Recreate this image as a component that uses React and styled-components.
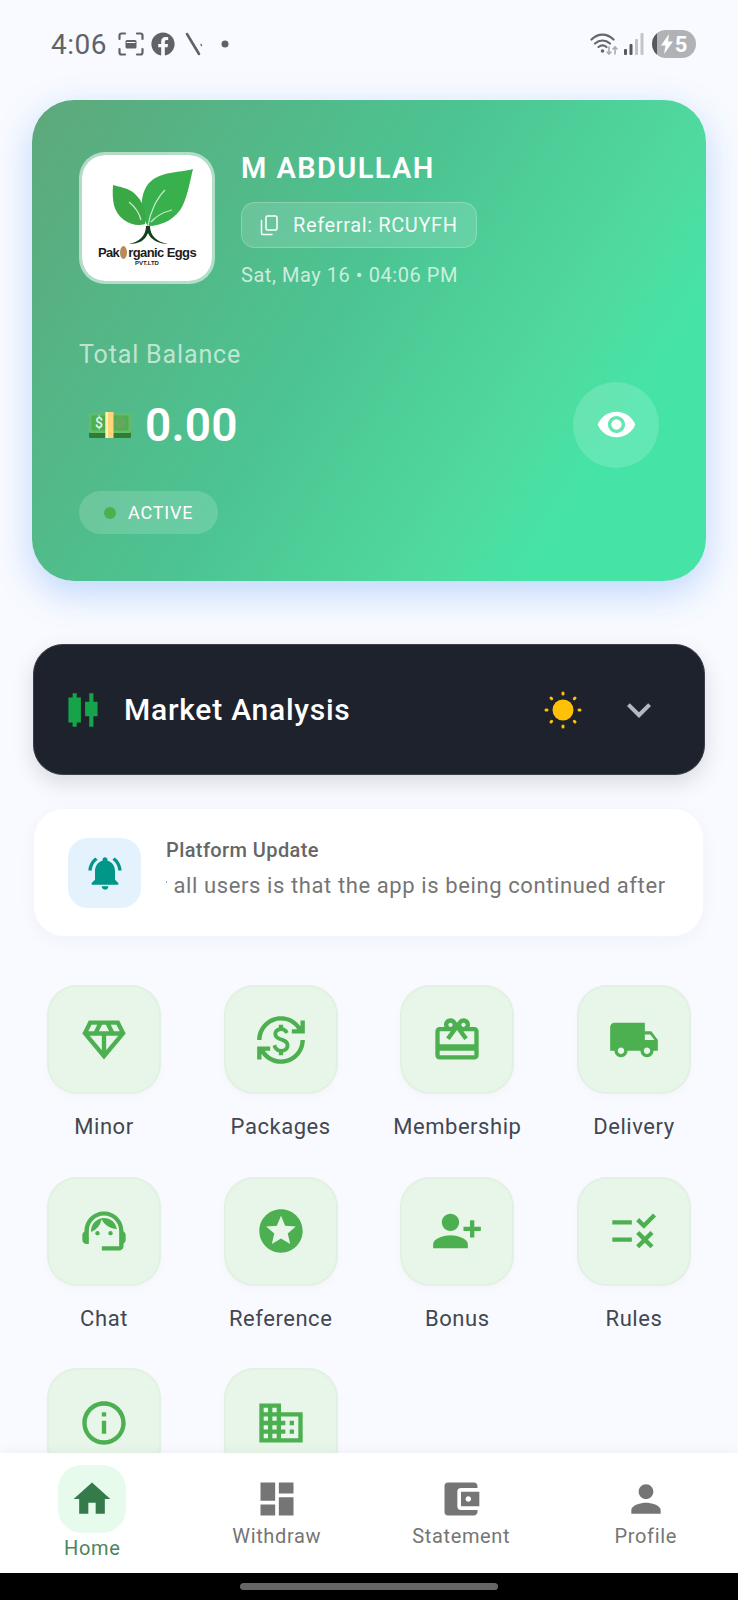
import React from 'react';
import styled, { createGlobalStyle } from 'styled-components';
import { FaFacebook } from 'react-icons/fa';
import {
  MdOutlineDiamond,
  MdCurrencyExchange,
  MdOutlineCardGiftcard,
  MdLocalShipping,
  MdSupportAgent,
  MdStars,
  MdPersonAdd,
  MdRule,
  MdInfoOutline,
  MdDomain,
  MdHome,
  MdDashboard,
  MdAccountBalanceWallet,
  MdPerson,
  MdVisibility,
  MdCandlestickChart,
  MdKeyboardArrowDown,
  MdNotificationsActive,
} from 'react-icons/md';

const GlobalStyle = createGlobalStyle`
  html, body {
    margin: 0;
    padding: 0;
    background: #f8faff;
  }
  body {
    font-family: Roboto, "Liberation Sans", sans-serif;
  }
`;

const Screen = styled.div`
  width: 738px;
  height: 1600px;
  display: flex;
  flex-direction: column;
  overflow: hidden;
  background: #f8faff;
`;

const Scroll = styled.main`
  flex: 1;
  min-height: 0;
  overflow: hidden;
`;

const StatusBar = styled.div`
  height: 100px;
  box-sizing: border-box;
  padding: 26px 42px 0 51px;
  display: flex;
  align-items: flex-start;
  justify-content: space-between;
  color: #5f6368;
`;

const StatusLeft = styled.div`
  display: flex;
  align-items: center;
  height: 36px;
`;

const Time = styled.span`
  font-size: 28px;
  font-weight: 400;
  letter-spacing: 0.5px;
  margin-right: 11px;
`;

const StatusRight = styled.div`
  display: flex;
  align-items: center;
  height: 36px;
`;

const Battery = styled.div`
  width: 44px;
  height: 28px;
  margin-left: 8px;
  border-radius: 14px;
  background: linear-gradient(90deg, #55595e 0 5px, #b0b2b5 5px);
  display: flex;
  align-items: center;
  justify-content: center;
  gap: 2px;
  color: #fff;
  font-size: 22px;
  font-weight: 700;
`;

const BalanceCard = styled.section`
  margin: 0 32px;
  height: 481px;
  box-sizing: border-box;
  padding: 52px 47px 0;
  border-radius: 42px;
  background: linear-gradient(122deg, #5da87b 0%, #4cc492 45%, #50da9f 71%, #45e4a6 82%, #46e3a5 100%);
  box-shadow: 0 12px 36px rgba(33, 120, 243, 0.27);
  color: #fff;
`;

const TopRow = styled.div`
  display: flex;
  gap: 26px;
  height: 132px;
`;

const LogoBox = styled.div`
  width: 136px;
  height: 132px;
  flex: none;
  box-sizing: border-box;
  border: 3px solid rgba(255, 255, 255, 0.55);
  background-clip: padding-box;
  border-radius: 26px;
  background-color: #fff;
  display: flex;
  flex-direction: column;
  align-items: center;
  padding-top: 9px;
  overflow: hidden;
`;

const LogoName = styled.div`
  display: flex;
  align-items: center;
  height: 14px;
  flex: none;
  font-family: "Liberation Sans", sans-serif;
  font-size: 13px;
  font-weight: 700;
  letter-spacing: -0.6px;
  color: #1c1c1c;
  white-space: nowrap;
`;

const Egg = styled.span`
  display: inline-block;
  width: 7px;
  height: 13px;
  margin: 0 1px;
  border-radius: 50%;
  background: #b98a58;
`;

const LogoSub = styled.div`
  flex: none;
  font-family: "Liberation Sans", sans-serif;
  font-size: 6px;
  font-weight: 700;
  line-height: 9px;
  color: #222;
`;

const Info = styled.div`
  display: flex;
  flex-direction: column;
  align-items: flex-start;
  margin-top: -1px;
`;

const Name = styled.div`
  flex: none;
  font-size: 29px;
  font-weight: 600;
  line-height: 34px;
  letter-spacing: 1.4px;
`;

const ReferralPill = styled.div`
  flex: none;
  margin-top: 17px;
  height: 46px;
  box-sizing: border-box;
  padding: 0 18px;
  display: flex;
  align-items: center;
  gap: 15px;
  border: 1px solid rgba(255, 255, 255, 0.22);
  border-radius: 14px;
  background: rgba(255, 255, 255, 0.14);
  font-size: 20px;
  font-weight: 400;
  letter-spacing: 0.63px;
  color: rgba(255, 255, 255, 0.95);
`;

const DateLine = styled.div`
  flex: none;
  margin-top: 14px;
  font-size: 20px;
  line-height: 26px;
  letter-spacing: 0.55px;
  color: rgba(255, 255, 255, 0.72);
`;

const BalanceLabel = styled.div`
  margin-top: 56px;
  font-size: 25px;
  line-height: 30px;
  letter-spacing: 0.85px;
  color: rgba(255, 255, 255, 0.65);
`;

const BalanceRow = styled.div`
  margin-top: 12px;
  height: 85px;
  display: flex;
  align-items: center;
  justify-content: space-between;
`;

const Amount = styled.div`
  display: flex;
  align-items: center;
  gap: 14px;
  padding-left: 10px;
  font-size: 46px;
  font-weight: 600;
  letter-spacing: 0.2px;
`;

const EyeButton = styled.div`
  width: 86px;
  height: 86px;
  border-radius: 50%;
  background: rgba(255, 255, 255, 0.16);
  display: flex;
  align-items: center;
  justify-content: center;
  font-size: 41px;
`;

const StatusPill = styled.div`
  margin-top: 24px;
  width: 139px;
  height: 43px;
  box-sizing: border-box;
  padding-left: 25px;
  display: flex;
  align-items: center;
  gap: 12px;
  border-radius: 22px;
  background: rgba(255, 255, 255, 0.16);
  font-size: 18px;
  font-weight: 400;
  letter-spacing: 0.8px;
`;

const Dot = styled.span`
  width: 12px;
  height: 12px;
  border-radius: 50%;
  background: #4caf50;
`;

const MarketBar = styled.section`
  margin: 63px 33px 0;
  height: 131px;
  box-sizing: border-box;
  padding: 0 41px 0 24px;
  display: flex;
  align-items: center;
  border: 1px solid #3a3e4a;
  border-radius: 30px;
  background: #1e222d;
  box-shadow: 0 8px 22px rgba(0, 0, 0, 0.13);
  color: #fff;
`;

const MarketTitle = styled.div`
  flex: 1;
  margin-left: 16px;
  font-size: 30px;
  font-weight: 500;
  letter-spacing: 0.75px;
`;

const NoticeCard = styled.section`
  margin: 34px 35px 0 34px;
  height: 127px;
  box-sizing: border-box;
  padding: 0 38px 0 34px;
  display: flex;
  align-items: center;
  gap: 25px;
  border-radius: 30px;
  background: #fff;
  box-shadow: 0 4px 20px rgba(40, 60, 120, 0.04);
`;

const BellBox = styled.div`
  width: 73px;
  height: 70px;
  flex: none;
  border-radius: 20px;
  background: #e3f2fd;
  display: flex;
  align-items: center;
  justify-content: center;
  color: #009688;
  font-size: 40px;
`;

const NoticeText = styled.div`
  flex: 1;
  min-width: 0;
  overflow: hidden;
  padding-bottom: 8px;
`;

const NoticeTitle = styled.div`
  font-size: 20px;
  font-weight: 500;
  line-height: 24px;
  letter-spacing: 0.4px;
  color: #666;
`;

const Marquee = styled.div`
  margin-top: 10px;
  margin-left: ${(props) => props.$offset}px;
  font-size: 22px;
  line-height: 28px;
  letter-spacing: 0.6px;
  color: #757575;
  white-space: nowrap;
`;

const MenuGrid = styled.div`
  margin-top: 49px;
  padding: 0 47px;
  display: grid;
  grid-template-columns: repeat(4, 114px);
  justify-content: space-between;
  row-gap: 35.5px;
`;

const MenuItem = styled.div`
  display: flex;
  flex-direction: column;
  align-items: center;
`;

const MenuTile = styled.div`
  width: 114px;
  height: 109px;
  box-sizing: border-box;
  border: 2px solid rgba(76, 175, 80, 0.04);
  border-radius: 30px;
  background: #e8f5e9;
  box-shadow: 0 4px 10px rgba(0, 0, 0, 0.02);
  display: flex;
  align-items: center;
  justify-content: center;
  color: #4caf50;
  font-size: 52px;
`;

const MenuLabel = styled.div`
  margin-top: 19px;
  font-size: 22px;
  font-weight: 400;
  line-height: 28px;
  letter-spacing: 0.55px;
  color: #424750;
  white-space: nowrap;
`;

const FlippedIcon = styled(MdPersonAdd)`
  transform: scaleX(-1);
`;

const BottomNav = styled.nav`
  height: 120px;
  flex: none;
  display: grid;
  grid-template-columns: repeat(4, 1fr);
  background: #fff;
  box-shadow: 0 -2px 10px rgba(0, 0, 0, 0.04);
  z-index: 1;
`;

const NavItem = styled.div`
  display: flex;
  flex-direction: column;
  align-items: center;
  padding-top: 12px;
`;

const NavIcon = styled.div`
  width: ${(props) => (props.$active ? '68px' : '44px')};
  height: ${(props) => (props.$active ? '68px' : '56px')};
  box-sizing: border-box;
  padding-top: 12px;
  display: flex;
  justify-content: center;
  border-radius: 24px;
  background: ${(props) => (props.$active ? '#e6fbec' : 'transparent')};
  color: ${(props) => (props.$active ? '#357a4b' : '#757575')};
  font-size: 44px;
`;

const NavLabel = styled.div`
  margin-top: 3px;
  font-size: 20px;
  line-height: 24px;
  letter-spacing: 0.65px;
  color: ${(props) => (props.$active ? '#4b8660' : '#757575')};
`;

const GestureBar = styled.div`
  height: 27px;
  flex: none;
  background: #000;
  display: flex;
  justify-content: center;
  padding-top: 10px;
  box-sizing: border-box;
`;

const GestureHandle = styled.div`
  width: 258px;
  height: 7px;
  border-radius: 4px;
  background: #666;
`;

const ScreenshotIcon = () => (
  <svg width="26" height="24" viewBox="0 0 26 24" fill="none" stroke="#5f6368" strokeWidth="2.2" strokeLinecap="round">
    <path d="M1.5 7V3.5a2 2 0 0 1 2-2H7M19 1.5h3.5a2 2 0 0 1 2 2V7M24.5 17v3.5a2 2 0 0 1-2 2H19M7 22.5H3.5a2 2 0 0 1-2-2V17" />
    <rect x="7.5" y="8" width="11" height="8.5" rx="1.5" fill="#5f6368" stroke="none" />
    <path d="M9 10.5h8" stroke="#fff" strokeWidth="1" />
  </svg>
);

const SlashIcon = () => (
  <svg width="20" height="24" viewBox="0 0 20 24" fill="none" stroke="#5f6368" strokeLinecap="round" style={{ marginLeft: 10 }}>
    <path d="M2 2l12 20" strokeWidth="2.6" />
    <path d="M16 12.5l.5 1" strokeWidth="1.4" />
  </svg>
);

const WifiIcon = () => (
  <svg width="28" height="26" viewBox="0 0 28 26" fill="none" stroke="#63676b" strokeLinecap="round">
    <path d="M1.5 8.5C8 2 17 2 23.5 8.5" strokeWidth="2.2" />
    <path d="M5 12.5c4.5-4 10.5-4 15 0" strokeWidth="2.2" />
    <path d="M8.5 16c2.5-2 5.5-2 8 0" strokeWidth="2.2" />
    <circle cx="12.5" cy="20" r="1.8" fill="#63676b" stroke="none" />
    <path d="M19 16v7M17 21l2 2 2-2" stroke="#a9abae" strokeWidth="1.6" />
    <path d="M25 23v-7M23 18l2-2 2 2" stroke="#a9abae" strokeWidth="1.6" />
  </svg>
);

const SignalIcon = () => (
  <svg width="20" height="24" viewBox="0 0 20 24" style={{ marginLeft: 6 }}>
    <rect x="0" y="17" width="3" height="6" rx="1" fill="#55595e" />
    <rect x="5.5" y="12" width="3" height="11" rx="1" fill="#55595e" />
    <rect x="11" y="7" width="3" height="16" rx="1" fill="#c2c4c6" />
    <rect x="16.5" y="1" width="3" height="22" rx="1" fill="#c2c4c6" />
  </svg>
);

const BoltIcon = () => (
  <svg width="12" height="20" viewBox="0 0 12 20" fill="#fff">
    <path d="M8 0L0 11.5h4.5L3 20l9-12.5H7L8 0z" />
  </svg>
);

const CopyIcon = () => (
  <svg width="18" height="22" viewBox="0 0 18 22" fill="none" stroke="#fff" strokeWidth="1.5" strokeLinejoin="round" strokeLinecap="round">
    <rect x="6" y="2" width="11" height="14" rx="1.5" />
    <path d="M1.5 6.5V19a1.5 1.5 0 0 0 1.5 1.5h9" />
  </svg>
);

const MoneyIcon = () => (
  <svg width="42" height="26" viewBox="0 0 42 26">
    <rect x="0" y="20" width="42" height="6" rx="1" fill="#2e7d32" />
    <rect x="0" y="1" width="42" height="20" rx="1.5" fill="#66bb6a" />
    <rect x="2.5" y="3.5" width="37" height="15" rx="1" fill="#4caf50" />
    <circle cx="31" cy="11" r="6" fill="#66a75e" />
    <rect x="16.5" y="0" width="8" height="26" fill="#ffd77a" />
    <rect x="16.5" y="0" width="2.5" height="26" fill="#fff0b8" />
    <text x="6" y="16" fontSize="14" fontFamily="Roboto, sans-serif" fontWeight="500" fill="#e8f5e9">$</text>
  </svg>
);

const SunIcon = () => {
  const rays = [0, 45, 90, 135, 180, 225, 270, 315];
  return (
    <svg width="38" height="38" viewBox="0 0 38 38" fill="#ffc107">
      <circle cx="19" cy="19" r="10.5" />
      {rays.map((angle) => (
        <rect key={angle} x="17.5" y="0.5" width="3" height="4" rx="1.5" transform={`rotate(${angle} 19 19)`} />
      ))}
    </svg>
  );
};

const PlantLogo = () => (
  <svg width="130" height="81" viewBox="3 12 130 81" style={{ flex: 'none' }}>
    <path d="M114 17C100 21 82 19 70 31C61 41 60 62 69 74C84 74 98 66 104 53C109 42 111 29 114 17Z" fill="#38b14c" />
    <path d="M34 33C33 48 34 60 45 68C52 73 60 74 66 72C68 60 64 49 55 41C49 36 41 35 34 33Z" fill="#3aa845" />
    <path d="M67 74C67 84 60 90 50 92C61 92 66 88 69 81C72 88 80 92 89 92C78 90 71 84 71 74Z" fill="#14401f" />
    <path d="M69 74C71 60 78 46 86 38M72 70C77 64 85 60 93 58M62 68C60 60 55 54 50 50" fill="none" stroke="#c9e8cd" strokeWidth="1.2" />
  </svg>
);

const menuItems = [
  { label: 'Minor', Icon: MdOutlineDiamond },
  { label: 'Packages', Icon: MdCurrencyExchange },
  { label: 'Membership', Icon: MdOutlineCardGiftcard },
  { label: 'Delivery', Icon: MdLocalShipping },
  { label: 'Chat', Icon: MdSupportAgent },
  { label: 'Reference', Icon: MdStars },
  { label: 'Bonus', Icon: FlippedIcon },
  { label: 'Rules', Icon: MdRule },
  { label: 'About', Icon: MdInfoOutline },
  { label: 'Company', Icon: MdDomain },
];

const navItems = [
  { label: 'Home', Icon: MdHome, active: true },
  { label: 'Withdraw', Icon: MdDashboard },
  { label: 'Statement', Icon: MdAccountBalanceWallet },
  { label: 'Profile', Icon: MdPerson },
];

const App = () => {
  return (
    <Screen>
      <GlobalStyle />
      <Scroll>
        <StatusBar>
          <StatusLeft>
            <Time>4:06</Time>
            <ScreenshotIcon />
            <FaFacebook size={24} color="#5f6368" style={{ marginLeft: 7 }} />
            <SlashIcon />
            <svg width="8" height="8" style={{ marginLeft: 16 }}>
              <circle cx="4" cy="4" r="3.5" fill="#5f6368" />
            </svg>
          </StatusLeft>
          <StatusRight>
            <WifiIcon />
            <SignalIcon />
            <Battery>
              <BoltIcon />5
            </Battery>
          </StatusRight>
        </StatusBar>

        <BalanceCard>
          <TopRow>
            <LogoBox>
              <PlantLogo />
              <LogoName>
                Pak
                <Egg />
                rganic Eggs
              </LogoName>
              <LogoSub>PVT.LTD</LogoSub>
            </LogoBox>
            <Info>
              <Name>M ABDULLAH</Name>
              <ReferralPill>
                <CopyIcon />
                Referral: RCUYFH
              </ReferralPill>
              <DateLine>Sat, May 16 • 04:06 PM</DateLine>
            </Info>
          </TopRow>
          <BalanceLabel>Total Balance</BalanceLabel>
          <BalanceRow>
            <Amount>
              <MoneyIcon />
              0.00
            </Amount>
            <EyeButton>
              <MdVisibility />
            </EyeButton>
          </BalanceRow>
          <StatusPill>
            <Dot />
            ACTIVE
          </StatusPill>
        </BalanceCard>

        <MarketBar>
          <MdCandlestickChart size={50} color="#16a34a" />
          <MarketTitle>Market Analysis</MarketTitle>
          <SunIcon />
          <MdKeyboardArrowDown size={48} color="#b4b8c2" style={{ marginLeft: 33 }} />
        </MarketBar>

        <NoticeCard>
          <BellBox>
            <MdNotificationsActive />
          </BellBox>
          <NoticeText>
            <NoticeTitle>Platform Update</NoticeTitle>
            <Marquee $offset={-28}>for all users is that the app is being continued after</Marquee>
          </NoticeText>
        </NoticeCard>

        <MenuGrid>
          {menuItems.map(({ label, Icon }) => (
            <MenuItem key={label}>
              <MenuTile>
                <Icon />
              </MenuTile>
              <MenuLabel>{label}</MenuLabel>
            </MenuItem>
          ))}
        </MenuGrid>
      </Scroll>

      <BottomNav>
        {navItems.map(({ label, Icon, active }) => (
          <NavItem key={label}>
            <NavIcon $active={active}>
              <Icon />
            </NavIcon>
            <NavLabel $active={active}>{label}</NavLabel>
          </NavItem>
        ))}
      </BottomNav>
      <GestureBar>
        <GestureHandle />
      </GestureBar>
    </Screen>
  );
};

export default App;
